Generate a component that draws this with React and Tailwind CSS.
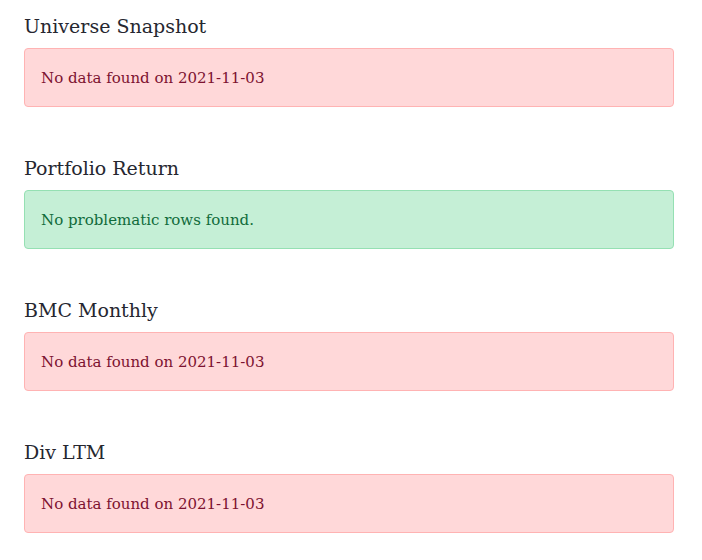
const sections = [
  { title: 'Universe Snapshot', ok: false, text: 'No data found on 2021-11-03' },
  { title: 'Portfolio Return', ok: true, text: 'No problematic rows found.' },
  { title: 'BMC Monthly', ok: false, text: 'No data found on 2021-11-03' },
  { title: 'Div LTM', ok: false, text: 'No data found on 2021-11-03' },
];

function Alert({ ok, children }) {
  const tone = ok
    ? 'bg-[#c5efd6] border-[#95e0b3] text-[#106b3b]'
    : 'bg-[#ffd8d9] border-[#ffb3b3] text-[#7d1230]';
  return (
    <div className={`h-[59px] flex items-center rounded-[4px] border px-4 pt-[1px] text-[15px] ${tone}`}>
      {children}
    </div>
  );
}

export default function App() {
  return (
    <div className="min-h-[560px] bg-white pl-6 pr-[28px] pt-[13px] font-['DejaVu_Serif',serif]">
      <div className="flex flex-col gap-[48px]">
        {sections.map((s) => (
          <section key={s.title}>
            <h2 className="mb-[9px] text-[19px] leading-[26px] text-[#262730]">{s.title}</h2>
            <Alert ok={s.ok}>{s.text}</Alert>
          </section>
        ))}
      </div>
    </div>
  );
}
